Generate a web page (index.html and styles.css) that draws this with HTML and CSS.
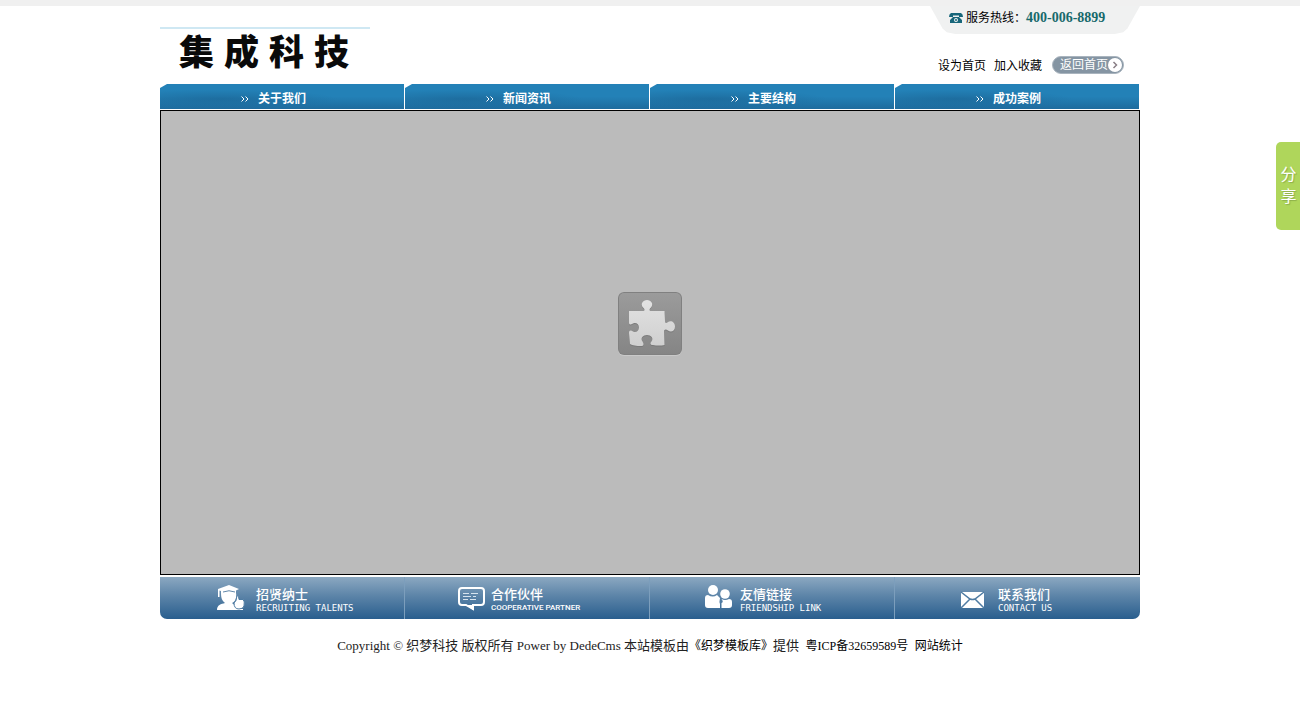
FILE: index.html
```html
<!DOCTYPE html>
<html lang="zh-CN">
<head>
<meta charset="utf-8">
<title>集成科技</title>
<link rel="stylesheet" href="styles.css">
</head>
<body>
<div class="page">
  <header class="header">
    <h1 class="logo"><span>集</span><span>成</span><span>科</span><span>技</span></h1>
    <div class="tools">
      <div class="hotline">
        <svg class="phone" viewBox="0 0 14 12" aria-hidden="true"><path d="M2 1h10q2 1 2 4h-4V3.500H4V5H0q0-3 2-4z"/><path fill-rule="evenodd" d="M4 5h6l3 3v3H1V8zM7 6a2 2 0 1 0 0 4a2 2 0 1 0 0-4z"/><circle cx="7" cy="8" r="1"/></svg>
        <span>服务热线：</span><strong>400-006-8899</strong>
      </div>
      <div class="quick">
        <a href="#">设为首页</a>
        <a href="#">加入收藏</a>
        <a class="home" href="#"><span>返回首页</span><svg viewBox="0 0 14 14" aria-hidden="true"><circle cx="7" cy="7" r="7" fill="#fff"/><path d="M5.500 4l3 3-3 3" fill="none" stroke="#8a7f86" stroke-width="1.500"/></svg></a>
      </div>
    </div>
  </header>
  <nav class="nav">
    <a href="#"><svg viewBox="0 0 8 6" aria-hidden="true"><path d="M0.500 0.500L3 3L0.500 5.500M4.500 0.500L7 3L4.500 5.500"/></svg>关于我们</a>
    <a href="#"><svg viewBox="0 0 8 6" aria-hidden="true"><path d="M0.500 0.500L3 3L0.500 5.500M4.500 0.500L7 3L4.500 5.500"/></svg>新闻资讯</a>
    <a href="#"><svg viewBox="0 0 8 6" aria-hidden="true"><path d="M0.500 0.500L3 3L0.500 5.500M4.500 0.500L7 3L4.500 5.500"/></svg>主要结构</a>
    <a href="#"><svg viewBox="0 0 8 6" aria-hidden="true"><path d="M0.500 0.500L3 3L0.500 5.500M4.500 0.500L7 3L4.500 5.500"/></svg>成功案例</a>
  </nav>
  <main class="stage">
    <svg class="plugin" viewBox="0 0 64 64" aria-hidden="true">
      <defs>
        <linearGradient id="tile" x1="0" y1="0" x2="0" y2="1"><stop offset="0" stop-color="#9b9b9b"/><stop offset="1" stop-color="#858585"/></linearGradient>
        <linearGradient id="piece" x1="0" y1="0" x2="0" y2="1"><stop offset="0" stop-color="#e2e2e2"/><stop offset="1" stop-color="#cfcfcf"/></linearGradient>
      </defs>
      <rect width="64" height="64" rx="6" fill="#c9c9c9"/>
      <rect width="64" height="63" rx="6" fill="#808080"/>
      <rect x="1" y="1" width="62" height="61" rx="5" fill="url(#tile)"/>
      <path d="M11 19H25C27 19 27 17 25 15.500C22 12 25 8 29 8S36 12 33 15.500C31 17 31 19 33 19H46.500L47 29C47 32 49 31 50 30C53 28 57 30 57 34.500S53 41 50 38.500C48 37 46 37 46 40L46.500 53Q41 54 35 53C32 53 32 51 33.500 49.500C36 46 33 43 29 43S22 46 24.500 49.500C26 52 26 54 23 54Q16 54 12 52L11 41C11 38 13 38 15 39.500C18 41 21 39 21 35.500S18 30 15 31.500C12 33 11 33 11 30Z" fill="#6f6f6f" opacity=".6" transform="translate(0 1)"/>
      <path d="M11 19H25C27 19 27 17 25 15.500C22 12 25 8 29 8S36 12 33 15.500C31 17 31 19 33 19H46.500L47 29C47 32 49 31 50 30C53 28 57 30 57 34.500S53 41 50 38.500C48 37 46 37 46 40L46.500 53Q41 54 35 53C32 53 32 51 33.500 49.500C36 46 33 43 29 43S22 46 24.500 49.500C26 52 26 54 23 54Q16 54 12 52L11 41C11 38 13 38 15 39.500C18 41 21 39 21 35.500S18 30 15 31.500C12 33 11 33 11 30Z" fill="url(#piece)"/>
    </svg>
  </main>
  <nav class="links">
    <a class="recruit" href="#">
      <svg viewBox="0 0 28 26" aria-hidden="true"><path d="M1 4L12 0L22 4L19 5.500V8C20 13 18 17 15 18L18 20.500C20 24 23 24 26 24V25H0C0 20 4 19 8 18C4 15 4 11 4 6L2.500 5.500V12H1z"/><path d="M6 7Q12 4.500 18 7" fill="none" stroke="#6288aa"/><path d="M19 15.500L20 10.500Q22 10.500 22 14.500H26Q28 16 27 21Q26 24 22 24Q17 24 17 18z" stroke="#4f7ca3"/></svg>
      <span class="label"><b>招贤纳士</b><small>RECRUITING TALENTS</small></span>
    </a>
    <a class="partner" href="#">
      <svg viewBox="0 0 28 26" aria-hidden="true"><path d="M4 3H23Q26 3 26 6V17Q26 20 23 20H15V24L8 20H4Q1 20 1 17V6Q1 3 4 3Z" fill="none" stroke="#fff" stroke-width="2"/><path d="M8 20H15V25z"/><path d="M5 8.500H11M13 8.500H20M5 11.500H13M15 11.500H18M5 14.500H10M12 14.500H18" fill="none" stroke="#d6e3ee"/></svg>
      <span class="label"><b>合作伙伴</b><small class="narrow">COOPERATIVE PARTNER</small></span>
    </a>
    <a class="friends" href="#">
      <svg viewBox="0 0 28 26" aria-hidden="true"><circle cx="8" cy="5" r="5"/><path d="M3 10Q8 13 12 10Q14 12 15 13Q14 17 15 19V23H3Q0 23 0 20V13Q0 10 3 10Z"/><circle cx="20" cy="9" r="4.800"/><path d="M16.500 14Q20 16 24 14Q27 14 27 17V20Q27 23 24 23H16.500V18Q19 17 16.500 14Z"/></svg>
      <span class="label"><b>友情链接</b><small>FRIENDSHIP LINK</small></span>
    </a>
    <a class="contact" href="#">
      <svg viewBox="0 0 28 26" aria-hidden="true"><path d="M2 7H25V23H2z"/><path d="M2 7L11 14Q13.500 15 16 14L25 7M2 23L11 14M25 23L16 14" fill="none" stroke="#4f7ca3" stroke-width="1.500"/></svg>
      <span class="label"><b>联系我们</b><small>CONTACT US</small></span>
    </a>
  </nav>
  <footer class="footer">Copyright © 织梦科技 版权所有 Power by DedeCms 本站模板由<a href="#">《织梦模板库》</a>提供&nbsp; <a href="#">粤ICP备32659589号</a>&nbsp; <a href="#">网站统计</a></footer>
</div>
<button class="share" type="button"><span>分</span><span>享</span></button>
</body>
</html>
```
FILE: styles.css
```css
* { box-sizing: border-box; }
body {
  margin: 0;
  border-top: 6px solid #f0f0f0;
  background: #fff;
  color: #000;
  font: 12px/16px "Liberation Serif", "Noto Sans CJK SC", serif;
}
a { color: inherit; text-decoration: none; }
.page { max-width: 980px; margin: 0 auto; }

.header { display: flex; justify-content: space-between; align-items: flex-start; height: 78px; }
.logo {
  display: flex;
  gap: 10px;
  width: 210px;
  margin: 21px 0 0;
  padding: 0 0 0 19px;
  border-top: 2px solid #cfe8f3;
  color: #0a0a0a;
  font: 900 35px/42px "Noto Sans CJK SC", sans-serif;
}
.tools { display: flex; flex-direction: column; align-items: flex-end; gap: 21px; }
.hotline {
  display: flex;
  align-items: center;
  width: 210px;
  height: 28px;
  padding: 0 0 4px 19px;
  background: #f0f1f1;
  clip-path: polygon(0 0, 100% 0, 94% 80%, 92% 94%, 88% 100%, 12% 100%, 8% 94%, 6% 80%);
}
.phone { width: 14px; height: 12px; margin-right: 3px; fill: #17667a; }
.hotline strong { color: #17696b; font-size: 14px; }
.quick { display: flex; align-items: center; gap: 8px; padding-right: 16px; line-height: 18px; }
.quick > a { padding-top: 2px; }
.quick .home {
  display: flex;
  align-items: center;
  justify-content: space-between;
  width: 72px;
  height: 18px;
  margin-left: 2px;
  padding: 0 1px 0 7px;
  border: 1px solid #a9b4be;
  border-radius: 9px;
  background: #8595a3;
  color: #fff;
}
.home svg { flex: none; width: 14px; height: 14px; }

.nav { display: grid; grid-template-columns: repeat(4, 1fr); height: 25px; }
.nav a {
  display: flex;
  align-items: center;
  gap: 9px;
  margin-right: 1px;
  padding: 4px 0 0 81px;
  background:
    radial-gradient(ellipse at 25% 60%, #1b6595aa 0, #1b659500 45%),
    linear-gradient(#2381b7 0, #2381b7 50%, #1e6b9d);
  clip-path: polygon(0 4px, 7px 0, 100% 0, 100% 100%, 0 100%);
  color: #fff;
  font-weight: bold;
}
.nav svg { width: 8px; height: 6px; fill: none; stroke: #fff; }

.stage {
  display: flex;
  align-items: center;
  justify-content: center;
  height: 465px;
  margin-top: 1px;
  padding-bottom: 37px;
  border: 1px solid #000;
  background: #bbb;
}
.plugin { width: 64px; height: 64px; }

.links {
  display: grid;
  grid-template-columns: repeat(4, 1fr);
  height: 42px;
  margin-top: 2px;
  border-radius: 0 0 7px 7px;
  background: linear-gradient(#8ba8c1, #5c84a8 45%, #295e8e);
  color: #fff;
}
.links a { display: flex; align-items: center; gap: 11px; border-right: 1px solid #7c9ebc; }
.links a:last-child { border-right: 0; }
.links svg { width: 28px; height: 26px; fill: #fff; }
.label { display: flex; flex-direction: column; padding-top: 4px; }
.label b { font: 500 13px/15px "Noto Sans CJK SC", sans-serif; }
.label small { font: 9px/14px "DejaVu Sans Mono", monospace; }
.label .narrow { font-family: "Roboto", sans-serif; font-size: 8px; font-weight: 500; }
.recruit { padding-left: 57px; }
.partner { padding-left: 53px; }
.links .partner { gap: 5px; }
.friends { padding-left: 55px; }
.links .friends { gap: 7px; }
.contact { padding-left: 64px; }

.footer { padding-top: 18px; text-align: center; font-size: 13px; line-height: 18px; color: #222; }
.footer a { font-size: 12px; color: #000; }

.share {
  position: fixed;
  top: 142px;
  right: 0;
  display: flex;
  flex-direction: column;
  align-items: center;
  justify-content: center;
  width: 24px;
  height: 88px;
  padding: 0 0 4px 1px;
  border: 0;
  border-radius: 5px 0 0 5px;
  background: #afd65b;
  color: #fff;
  font: 16px/22px "Noto Sans CJK SC", sans-serif;
  text-shadow: 1px 1px 1px #8cae49;
}
```
